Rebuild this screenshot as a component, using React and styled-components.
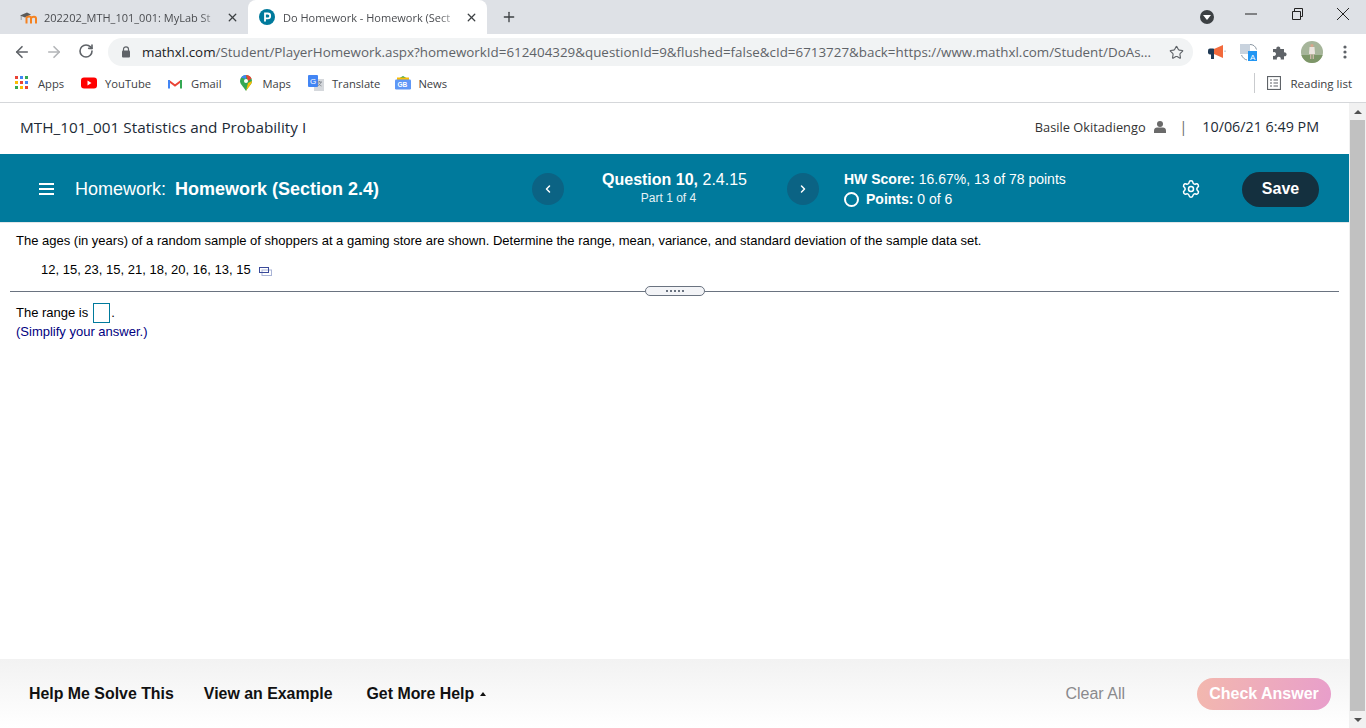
import React from 'react';
import styled, { createGlobalStyle } from 'styled-components';
import { ArrowLeft, ArrowRight, RotateCw, Star, X, Plus, Settings, ChevronLeft, ChevronRight } from 'lucide-react';

const Global = createGlobalStyle`
  html, body { margin: 0; padding: 0; background: #fff; overflow: hidden; }
  * { box-sizing: border-box; }
`;
const Shell = styled.div`
  width: 1366px; height: 728px; display: flex; flex-direction: column; overflow: hidden;
  font-family: "Liberation Sans", Arial, sans-serif; color: #000;
`;

/* ---------- browser chrome ---------- */
const TabStrip = styled.div`
  height: 34px; background: #dee1e6; display: flex; align-items: stretch; padding-left: 8px; flex: none;
`;
const Tab = styled.div`
  width: ${p => p.$w}px; height: 34px; display: flex; align-items: center; padding-left: ${p => p.$pad}px;
  border-radius: 8px 8px 0 0; background: ${p => (p.$active ? '#fff' : 'transparent')};
  font: 11px "Open Sans", sans-serif; color: #4a4c50;
`;
const TabTitle = styled.span`
  width: ${p => p.$w}px; margin-left: ${p => p.$ml}px; white-space: nowrap;
  -webkit-mask-image: linear-gradient(90deg, #000 88%, transparent 100%);
  mask-image: linear-gradient(90deg, #000 88%, transparent 100%);
`;
const TabClose = styled(X)` margin-left: ${p => p.$ml}px; color: #3c4043; flex: none; `;
const NewTab = styled(Plus)` margin: 9px 0 0 14px; color: #3c4043; `;
const WindowControls = styled.div`
  margin-left: auto; display: flex; align-items: flex-start; padding-top: 8px; color: #222;
`;
const ProfileBadge = styled.div`
  width: 14px; height: 14px; border-radius: 50%; background: #3c4043; margin: 2px 31px 0 0;
  display: flex; align-items: center; justify-content: center;
  &::after { content: ''; border: 4px solid transparent; border-top: 5px solid #fff; border-bottom: 0; }
`;
const WinGlyph = styled.svg` width: 12px; height: 12px; margin-right: ${p => p.$mr}px; flex: none; `;

const Toolbar = styled.div`
  height: 34px; background: #fff; display: flex; align-items: center; flex: none; padding-top: 2px;
`;
const NavIcon = styled.span`
  width: 32px; display: flex; justify-content: center; color: ${p => (p.$off ? '#b3b5b8' : '#5f6368')};
`;
const NavGroup = styled.div` display: flex; padding-left: 6px; width: 108px; `;
const Omnibox = styled.div`
  width: 1085px; height: 28px; border-radius: 14px; background: #f1f3f4; display: flex; align-items: center;
  padding: 0 9px 0 13px; font: 13.38px "Open Sans", sans-serif; color: #5f6368;
`;
const LockGlyph = styled.svg` width: 10px; height: 12px; flex: none; `;
const UrlHost = styled.span` color: #202124; `;
const UrlText = styled.span` margin-left: 11px; white-space: nowrap; flex: 1; `;
const OmniStar = styled(Star)` color: #5f6368; flex: none; `;
const Extensions = styled.div` display: flex; align-items: center; padding-left: 14px; `;
const ExtSlot = styled.span`
  width: ${p => p.$w || 32}px; display: flex; justify-content: center; align-items: center;
`;

const Bookmarks = styled.div`
  height: 35px; background: #fff; border-bottom: 1px solid #d5d7da; display: flex; align-items: center;
  padding: 0 14px 4px 15px; font: 11.2px "Open Sans", sans-serif; color: #3c4043; flex: none;
`;
const Bookmark = styled.div` display: flex; align-items: center; gap: ${p => p.$gap || 8}px; margin-right: ${p => p.$mr}px; `;
const ReadingList = styled.div`
  margin-left: auto; display: flex; align-items: center; gap: 9px; border-left: 1px solid #c9cbce; height: 20px;
  padding-left: 12px; font-size: 11.5px;
`;

/* ---------- page ---------- */
const Viewport = styled.div` flex: 1; display: flex; min-height: 0; `;
const Page = styled.div` width: 1349px; display: flex; flex-direction: column; background: #fff; `;
const Scrollbar = styled.div`
  width: 17px; background: #f1f1f1; display: flex; flex-direction: column; align-items: center;
`;
const ScrollArrow = styled.div`
  height: 17px; flex: none; display: flex; align-items: center; justify-content: center;
  &::after {
    content: ''; border: 4px solid transparent;
    ${p => (p.$up ? 'border-bottom: 4px solid #505050; border-top: 0;' : 'border-top: 4px solid #505050; border-bottom: 0;')}
  }
`;
const ScrollThumb = styled.div` flex: 1; width: 15px; background: #c1c1c1; `;

const CourseBar = styled.div`
  height: 51px; display: flex; align-items: center; padding: 0 30px 4px 20px; flex: none;
  font: 14.3px "Open Sans", sans-serif; color: #1c2a36;
`;
const CourseTitle = styled.div` flex: 1; font-size: 15.3px; `;
const UserName = styled.span` font-size: 12.8px; color: #333; `;
const UserIcon = styled.svg` width: 12px; height: 12px; margin: 0 14px 0 8px; color: #6a6a6a; `;
const Pipe = styled.span` color: #666; margin-right: 15px; font-size: 14px; `;
const DateText = styled.span` white-space: nowrap; `;

const Band = styled.div`
  height: 69px; background: #007a9c; color: #fff; display: flex; align-items: center; flex: none;
  border-bottom: 1px solid #e2e6e8; padding: 2px 0 0 39px;
`;
const Burger = styled.div`
  width: 15px; height: 12px; border-top: 2px solid #fff; border-bottom: 2px solid #fff; position: relative; flex: none;
  &::after { content: ''; position: absolute; left: 0; right: 0; top: 3px; height: 2px; background: #fff; }
`;
const HwTitle = styled.div` width: 457px; margin-left: 21px; font-size: 18px; white-space: pre; `;
const HwName = styled.b` margin-left: 4px; `;
const RoundNav = styled.div`
  width: 32px; height: 32px; border-radius: 50%; background: #0b6384; flex: none;
  display: flex; align-items: center; justify-content: center; color: #fff;
`;
const QuestionInfo = styled.div` width: 223px; text-align: center; margin-top: -2px; `;
const QLine = styled.div` font-size: 16px; line-height: 20px; padding-right: 2px; `;
const QPart = styled.div` font-size: 12px; line-height: 16px; color: #e6f2f6; padding-right: 14px; `;
const ScoreBlock = styled.div` width: 347px; margin-left: 25px; font-size: 14px; line-height: 20px; `;
const PointsRow = styled.div` display: flex; align-items: center; `;
const Ring = styled.span`
  width: 15px; height: 15px; border: 2px solid #fff; border-radius: 50%; margin-right: 7px; flex: none;
`;
const GearSlot = styled.div` width: 51px; display: flex; color: #fff; margin-left: -10px; margin-right: 10px; `;
const SaveButton = styled.div`
  width: 77px; height: 35px; border-radius: 18px; background: #14303f; color: #fff;
  font-weight: 700; font-size: 16px; display: flex; align-items: center; justify-content: center;
`;

const Content = styled.div` flex: 1; font-size: 13px; color: #000; `;
const Prompt = styled.div` padding: 11px 0 0 16px; line-height: 14px; `;
const DataLine = styled.div` padding: 15px 0 0 41px; line-height: 14px; display: flex; align-items: center; `;
const DataIcon = styled.svg` width: 13px; height: 9px; margin-left: 8px; margin-top: 2px; `;
const Divider = styled.div` margin: 9px 10px 0; height: 10px; display: flex; align-items: center; `;
const Rule = styled.div` flex: 1; height: 1px; background: #6a7380; `;
const Handle = styled.div`
  width: 60px; height: 10px; border: 1px solid #6a7380; border-radius: 5px; background: #f3f4f7; flex: none;
  display: flex; align-items: center; justify-content: center; gap: 2px;
`;
const Dot = styled.i` width: 2px; height: 2px; background: #6a7380; display: block; `;
const AnswerLine = styled.div` padding: 7px 0 0 16px; display: flex; align-items: center; height: 27px; `;
const AnswerLabel = styled.span` margin-top: -2px; `;
const AnswerBox = styled.span`
  width: 17px; height: 20px; border: 1px solid #007a9c; margin: 0 1px 0 5px; display: inline-block;
`;
const Hint = styled.div` padding: 2px 0 0 16px; color: #000080; line-height: 14px; `;

const Footer = styled.div`
  height: 69px; flex: none; background: linear-gradient(#f2f2f2, #fff); display: flex; align-items: center;
  padding: 0 18px 0 29px; font-size: 16px;
`;
const HelpLink = styled.div`
  font-weight: 700; font-size: 15.9px; color: #111; margin-right: ${p => p.$mr}px; white-space: nowrap; display: flex; align-items: center;
`;
const Caret = styled.i`
  display: block; margin-left: 6px; border: 3.5px solid transparent; border-bottom: 4px solid #111; border-top: 0;
`;
const ClearAll = styled.div` margin-left: auto; color: #8a8a8d; margin-right: 72px; `;
const CheckButton = styled.div`
  width: 134px; height: 32px; border-radius: 16px; color: #fff; font-weight: 700;
  background: linear-gradient(100deg, #f3b8ae, #e89ecb); display: flex; align-items: center; justify-content: center;
`;

const Favicon = () => (
  <svg width="18" height="13" viewBox="0 0 18 13">
    <path d="M0 4.500 L7 1.500 L11 3.500 L5 6.500Z" fill="#5b5b5b" />
    <path d="M1.200 5V9" stroke="#8a8a8a" strokeWidth=".8" />
    <path d="M6.500 12.500V6.500c2-1.500 4.500-1.500 4.500.5v5.500M11 7c1.500-1.800 5-1.800 5 .5v5" fill="none" stroke="#f58220" strokeWidth="2" />
  </svg>
);
const PearsonIcon = () => (
  <svg width="16" height="16" viewBox="0 0 16 16">
    <circle cx="8" cy="8" r="8" fill="#007a9c" />
    <path d="M6 12.500V4.500h2.800a2.400 2.400 0 0 1 0 4.800H6" fill="none" stroke="#fff" strokeWidth="1.800" />
  </svg>
);
const LockIcon = () => (
  <LockGlyph viewBox="0 0 10 12">
    <path d="M2.500 5V3.300a2.500 2.500 0 0 1 5 0V5" fill="none" stroke="#5f6368" strokeWidth="1.200" />
    <rect x="1" y="4.600" width="8" height="7" rx="1" fill="#5f6368" />
  </LockGlyph>
);
const Megaphone = () => (
  <svg width="18" height="16" viewBox="0 0 18 16">
    <rect x="0" y="4.500" width="7" height="6" rx="2" fill="#1f3a56" />
    <rect x="3" y="9" width="3" height="6" fill="#1f3a56" />
    <path d="M6 5l9-4v13L6 10z" fill="#f26a3c" />
    <rect x="16" y="6.500" width="2" height="1.500" fill="#cfd8dc" />
  </svg>
);
const TranslateExt = () => (
  <svg width="18" height="18" viewBox="0 0 18 18">
    <rect x="0" y="1" width="10" height="10" fill="#c9d3de" />
    <rect x="8" y="8" width="9" height="10" fill="#2196f3" />
    <text x="10" y="16.500" fontSize="8" fill="#fff" fontFamily="Liberation Sans">A</text>
    <path d="M10 1.500c3 0 5.500 1.500 6.500 5M1.500 12c1 2.500 3 4.500 5.500 5" fill="none" stroke="#8a97a3" strokeWidth="1" />
  </svg>
);
const Puzzle = () => (
  <svg width="16" height="16" viewBox="0 0 16 16">
    <path d="M1 5h3.400a2 2 0 1 1 3.800 0H12v3.400a2 2 0 1 1 0 3.800V15.500H8.600a2 2 0 1 0-3.600 0H1v-3.800a2 2 0 1 0 0-3.400z" fill="#5f6368" />
  </svg>
);
const Avatar = () => (
  <svg width="22" height="22" viewBox="0 0 22 22">
    <defs><clipPath id="av"><circle cx="11" cy="11" r="11" /></clipPath></defs>
    <g clipPath="url(#av)">
      <rect width="22" height="22" fill="#a6b59a" />
      <rect y="14" width="22" height="8" fill="#7d9668" />
      <path d="M8.500 6h5l.5 7H8z" fill="#ebe4de" />
      <circle cx="11" cy="4.500" r="1.600" fill="#d9a68c" />
      <rect x="9" y="13" width="1.400" height="5" fill="#c9b7a6" />
      <rect x="11.600" y="13" width="1.400" height="5" fill="#c9b7a6" />
    </g>
  </svg>
);
const KebabDots = () => (
  <svg width="4" height="14" viewBox="0 0 4 14">
    <circle cx="2" cy="2" r="1.600" fill="#5f6368" /><circle cx="2" cy="7" r="1.600" fill="#5f6368" /><circle cx="2" cy="12" r="1.600" fill="#5f6368" />
  </svg>
);
const AppsGrid = () => {
  const c = ['#ea4335', '#4285f4', '#34a853', '#fbbc04', '#ea4335', '#4285f4', '#34a853', '#fbbc04', '#ea4335'];
  return (
    <svg width="14" height="14" viewBox="0 0 14 14">
      {c.map((f, i) => <rect key={i} x={(i % 3) * 5} y={Math.floor(i / 3) * 5} width="3" height="3" fill={f} />)}
    </svg>
  );
};
const YouTubeIcon = () => (
  <svg width="16" height="12" viewBox="0 0 16 12">
    <rect width="16" height="11" y="0.500" rx="3" fill="#f00" /><path d="M6.500 3.500l4 2.500-4 2.500z" fill="#fff" />
  </svg>
);
const GmailIcon = () => (
  <svg width="14" height="11" viewBox="0 0 14 11">
    <path d="M1 3l6 4.500L13 3" fill="none" stroke="#ea4335" strokeWidth="2" />
    <path d="M1 2v8.500" stroke="#4285f4" strokeWidth="2" /><path d="M13 2v8.500" stroke="#34a853" strokeWidth="2" />
  </svg>
);
const MapsIcon = () => (
  <svg width="12" height="16" viewBox="0 0 12 16">
    <path d="M6 0a6 6 0 0 1 6 6c0 3-3 5-6 10C3 11 0 9 0 6a6 6 0 0 1 6-6z" fill="#34a853" />
    <path d="M1 2.500A6 6 0 0 1 6 0v4z" fill="#4285f4" /><path d="M6 0a6 6 0 0 1 5.500 3.500L8 6z" fill="#ea4335" />
    <path d="M12 6c0 3-3 5-6 10l2-8z" fill="#fbbc04" /><circle cx="6" cy="6" r="2" fill="#fff" />
  </svg>
);
const TranslateIcon = () => (
  <svg width="16" height="16" viewBox="0 0 16 16">
    <rect x="6" y="4" width="10" height="12" fill="#d5d8dc" /><rect width="10" height="12" rx="1" fill="#4285f4" />
    <text x="2" y="9" fontSize="8" fill="#fff" fontFamily="Liberation Sans">G</text>
    <path d="M9 7h5M11.500 6v1M13 7c-.5 2-2 3.500-3.500 4M10.500 8.500c.5 1 1.500 2 3 2.500" fill="none" stroke="#7a7f85" strokeWidth=".8" />
  </svg>
);
const NewsIcon = () => (
  <svg width="16" height="14" viewBox="0 0 16 14">
    <path d="M3 3l5-3 5 3z" fill="#34a853" /><rect x="2" y="1.500" width="12" height="4" fill="#fbbc04" />
    <rect y="3.500" width="16" height="10" rx="1.200" fill="#5e97f6" />
    <text x="2.500" y="11" fontSize="6.500" fontWeight="700" fill="#fff" fontFamily="Liberation Sans">GB</text>
  </svg>
);
const ReadingIcon = () => (
  <svg width="14" height="14" viewBox="0 0 14 14" fill="none" stroke="#5f6368">
    <rect x=".5" y=".5" width="13" height="13" strokeWidth="1.200" />
    <path d="M3 4h2M6.500 4H11M3 7h2M6.500 7H11M3 10h2M6.500 10H11" strokeWidth="1.200" />
  </svg>
);

export default function App() {
  return (
    <Shell>
      <Global />
      <TabStrip>
        <Tab $w={240} $pad={12}>
          <Favicon />
          <TabTitle $w={177} $ml={6}>202202_MTH_101_001: MyLab St</TabTitle>
          <TabClose size={13} strokeWidth={2.4} $ml={5} />
        </Tab>
        <Tab $w={239} $active $pad={11}>
          <PearsonIcon />
          <TabTitle $w={177} $ml={8}>Do Homework - Homework (Sect</TabTitle>
          <TabClose size={13} strokeWidth={2.4} $ml={5} />
        </Tab>
        <NewTab size={16} strokeWidth={2} />
        <WindowControls>
          <ProfileBadge />
          <WinGlyph $mr={34} viewBox="0 0 12 12"><path d="M0 6h12" stroke="#222" /></WinGlyph>
          <WinGlyph $mr={34} viewBox="0 0 12 12" fill="none" stroke="#222"><path d="M1.500 3.500h8v8h-8zM3.500 3.500V.5h8v8h-2" /></WinGlyph>
          <WinGlyph $mr={17} viewBox="0 0 12 12"><path d="M0 0l12 12M12 0L0 12" stroke="#222" /></WinGlyph>
        </WindowControls>
      </TabStrip>
      <Toolbar>
        <NavGroup>
          <NavIcon><ArrowLeft size={18} strokeWidth={2.2} /></NavIcon>
          <NavIcon $off><ArrowRight size={18} strokeWidth={2.2} /></NavIcon>
          <NavIcon><RotateCw size={16} strokeWidth={2.4} /></NavIcon>
        </NavGroup>
        <Omnibox>
          <LockIcon />
          <UrlText><UrlHost>mathxl.com</UrlHost>/Student/PlayerHomework.aspx?homeworkId=612404329&amp;questionId=9&amp;flushed=false&amp;cId=6713727&amp;back=https://www.mathxl.com/Student/DoAs...</UrlText>
          <OmniStar size={15} strokeWidth={1.8} />
        </Omnibox>
        <Extensions>
          <ExtSlot $w={20}><Megaphone /></ExtSlot>
          <ExtSlot $w={44}><TranslateExt /></ExtSlot>
          <ExtSlot $w={18}><Puzzle /></ExtSlot>
          <ExtSlot $w={46}><Avatar /></ExtSlot>
          <ExtSlot $w={20}><KebabDots /></ExtSlot>
        </Extensions>
      </Toolbar>
      <Bookmarks>
        <Bookmark $mr={17} $gap={9}><AppsGrid />Apps</Bookmark>
        <Bookmark $mr={17}><YouTubeIcon />YouTube</Bookmark>
        <Bookmark $mr={19} $gap={9}><GmailIcon />Gmail</Bookmark>
        <Bookmark $mr={17} $gap={10}><MapsIcon />Maps</Bookmark>
        <Bookmark $mr={15} $gap={8}><TranslateIcon />Translate</Bookmark>
        <Bookmark $gap={7}><NewsIcon />News</Bookmark>
        <ReadingList><ReadingIcon />Reading list</ReadingList>
      </Bookmarks>
      <Viewport>
        <Page>
          <CourseBar>
            <CourseTitle>MTH_101_001 Statistics and Probability I</CourseTitle>
            <UserName>Basile Okitadiengo</UserName>
            <UserIcon viewBox="0 0 12 12"><circle cx="6" cy="3" r="3" fill="currentColor" /><path d="M0 12V9.500C0 7.500 1.500 6.500 3 6.500h6c1.500 0 3 1 3 3V12z" fill="currentColor" /></UserIcon>
            <Pipe>|</Pipe>
            <DateText>10/06/21 6:49 PM</DateText>
          </CourseBar>
          <Band>
            <Burger />
            <HwTitle>Homework: <HwName>Homework (Section 2.4)</HwName></HwTitle>
            <RoundNav><ChevronLeft size={12} strokeWidth={3} /></RoundNav>
            <QuestionInfo>
              <QLine><b>Question 10,</b> 2.4.15</QLine>
              <QPart>Part 1 of 4</QPart>
            </QuestionInfo>
            <RoundNav><ChevronRight size={12} strokeWidth={3} /></RoundNav>
            <ScoreBlock>
              <div><b>HW Score:</b> 16.67%, 13 of 78 points</div>
              <PointsRow><Ring /><span><b>Points:</b> 0 of 6</span></PointsRow>
            </ScoreBlock>
            <GearSlot><Settings size={20} strokeWidth={1.8} /></GearSlot>
            <SaveButton>Save</SaveButton>
          </Band>
          <Content>
            <Prompt>The ages (in years) of a random sample of shoppers at a gaming store are shown. Determine the range, mean, variance, and standard deviation of the sample data set.</Prompt>
            <DataLine>
              12, 15, 23, 15, 21, 18, 20, 16, 13, 15
              <DataIcon viewBox="0 0 13 9" fill="none">
                <rect x="3" y="3" width="9.500" height="5.500" stroke="#a9b4d6" />
                <rect x=".5" y=".5" width="9" height="5" stroke="#3a4a9a" />
              </DataIcon>
            </DataLine>
            <Divider>
              <Rule />
              <Handle><Dot /><Dot /><Dot /><Dot /><Dot /></Handle>
              <Rule />
            </Divider>
            <AnswerLine><AnswerLabel>The range is</AnswerLabel><AnswerBox /><AnswerLabel>.</AnswerLabel></AnswerLine>
            <Hint>(Simplify your answer.)</Hint>
          </Content>
          <Footer>
            <HelpLink $mr={30}>Help Me Solve This</HelpLink>
            <HelpLink $mr={34}>View an Example</HelpLink>
            <HelpLink>Get More Help<Caret /></HelpLink>
            <ClearAll>Clear All</ClearAll>
            <CheckButton>Check Answer</CheckButton>
          </Footer>
        </Page>
        <Scrollbar>
          <ScrollArrow $up />
          <ScrollThumb />
          <ScrollArrow />
        </Scrollbar>
      </Viewport>
    </Shell>
  );
}
